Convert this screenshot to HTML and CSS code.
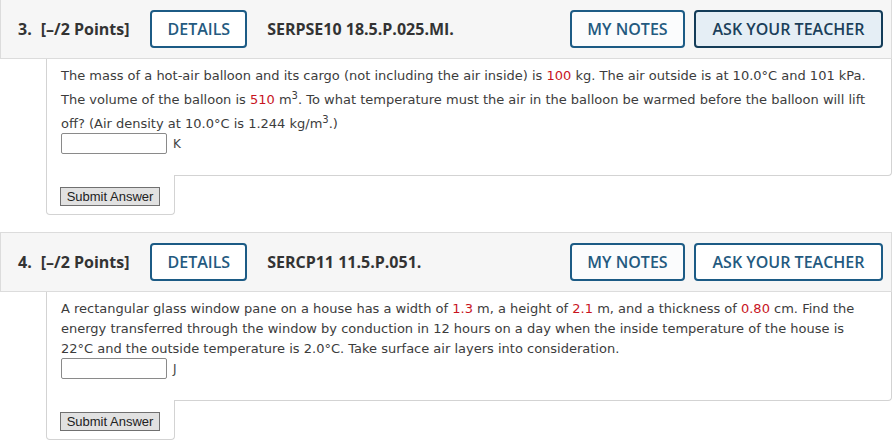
FILE: index.html
```html
<!DOCTYPE html>
<html lang="en">
<head>
<meta charset="utf-8">
<title>Questions</title>
<link rel="stylesheet" href="styles.css">
</head>
<body>
<div class="page">
  <section class="question">
    <header class="q-head">
      <span class="q-num">3.</span>
      <span class="q-pts">[–/2 Points]</span>
      <button class="btn">DETAILS</button>
      <span class="q-code">SERPSE10 18.5.P.025.MI.</span>
      <div class="q-actions">
        <button class="btn btn-notes">MY NOTES</button>
        <button class="btn btn-ask btn-active">ASK YOUR TEACHER</button>
      </div>
    </header>
    <div class="q-body">
      <div class="q-text">The mass of a hot-air balloon and its cargo (not including the air inside) is <span class="val">100</span> kg. The air outside is at 10.0°C and 101 kPa. The volume of the balloon is <span class="val">510</span> m<sup>3</sup>. To what temperature must the air in the balloon be warmed before the balloon will lift off? (Air density at 10.0°C is 1.244 kg/m<sup>3</sup>.)</div>
      <div class="answer"><input class="ans-input" type="text"><span class="unit">K</span></div>
    </div>
    <div class="q-submit"><button class="submit">Submit Answer</button></div>
  </section>

  <section class="question">
    <header class="q-head">
      <span class="q-num">4.</span>
      <span class="q-pts">[–/2 Points]</span>
      <button class="btn">DETAILS</button>
      <span class="q-code">SERCP11 11.5.P.051.</span>
      <div class="q-actions">
        <button class="btn btn-notes">MY NOTES</button>
        <button class="btn btn-ask">ASK YOUR TEACHER</button>
      </div>
    </header>
    <div class="q-body">
      <div class="q-text">A rectangular glass window pane on a house has a width of <span class="val">1.3</span> m, a height of <span class="val">2.1</span> m, and a thickness of <span class="val">0.80</span> cm. Find the energy transferred through the window by conduction in 12 hours on a day when the inside temperature of the house is 22°C and the outside temperature is 2.0°C. Take surface air layers into consideration.</div>
      <div class="answer"><input class="ans-input" type="text"><span class="unit unit-j">J</span></div>
    </div>
    <div class="q-submit"><button class="submit">Submit Answer</button></div>
  </section>
</div>
</body>
</html>
```

FILE: styles.css
```css
* { box-sizing: border-box; }

html, body {
  margin: 0;
  padding: 0;
  background: #ffffff;
}

.page {
  margin-top: -1px;
  width: 892px;
}

.question {
  margin-bottom: 17px;
}

.q-head {
  display: flex;
  align-items: center;
  height: 60px;
  padding: 0 8px 0 17px;
  background: #f6f6f6;
  border: 1px solid #dcdcdc;
  font-family: "Open Sans", sans-serif;
  font-size: 16px;
  font-weight: 700;
  color: #333333;
}

.q-num {
  margin-right: 9px;
}

.q-pts {
  margin-right: 21px;
}

.q-code {
  margin-left: 20px;
}

.q-actions {
  margin-left: auto;
  display: flex;
  gap: 9px;
}

.btn {
  height: 38px;
  padding: 0 15px;
  background: #ffffff;
  border: 2px solid #1c5b85;
  border-radius: 4px;
  font-family: "Open Sans", sans-serif;
  font-size: 16px;
  font-weight: 600;
  color: #245a80;
  cursor: pointer;
}

.btn-notes {
  width: 115px;
  background: #fbfcfd;
}

.btn-ask {
  width: 189px;
}

.btn-active {
  background: #e5eef5;
  border-color: #143c58;
  color: #1b3f5a;
}

.q-body {
  margin-left: 46px;
  padding: 7px 14px 21px 14px;
  border-left: 1px solid #d3d3d3;
  border-right: 1px solid #d3d3d3;
  border-bottom: 1px solid #d3d3d3;
  border-bottom-right-radius: 4px;
}

.q-text {
  font-family: "DejaVu Sans", Verdana, sans-serif;
  font-size: 13px;
  line-height: 20px;
  color: #3c3c3c;
}

.q-text sup {
  font-size: 10px;
  line-height: 20px;
  vertical-align: 5px;
}

.val {
  color: #c8141e;
}

.answer {
  display: flex;
  align-items: center;
  margin-top: -1px;
  height: 21px;
}

.ans-input {
  width: 106px;
  height: 21px;
  margin: 0;
  padding: 0 3px;
  border: 1px solid #8a8a8a;
  border-radius: 2px;
  background: #ffffff;
}

.unit {
  margin-left: 6px;
  font-family: "DejaVu Sans", Verdana, sans-serif;
  font-size: 12px;
  color: #444444;
}

.q-submit {
  margin-top: -1px;
  margin-left: 46px;
  width: 129px;
  padding: 12px 0 8px 13px;
  background: #ffffff;
  border-left: 1px solid #d3d3d3;
  border-right: 1px solid #d3d3d3;
  border-bottom: 1px solid #d3d3d3;
  border-radius: 0 0 4px 4px;
}

.submit {
  display: block;
  width: 100px;
  height: 19px;
  padding: 0;
  background: #e1e1e1;
  border: 1px solid #707070;
  border-radius: 0;
  font-family: "Liberation Sans", Arial, sans-serif;
  font-size: 13px;
  color: #222222;
  line-height: 17px;
}
```
